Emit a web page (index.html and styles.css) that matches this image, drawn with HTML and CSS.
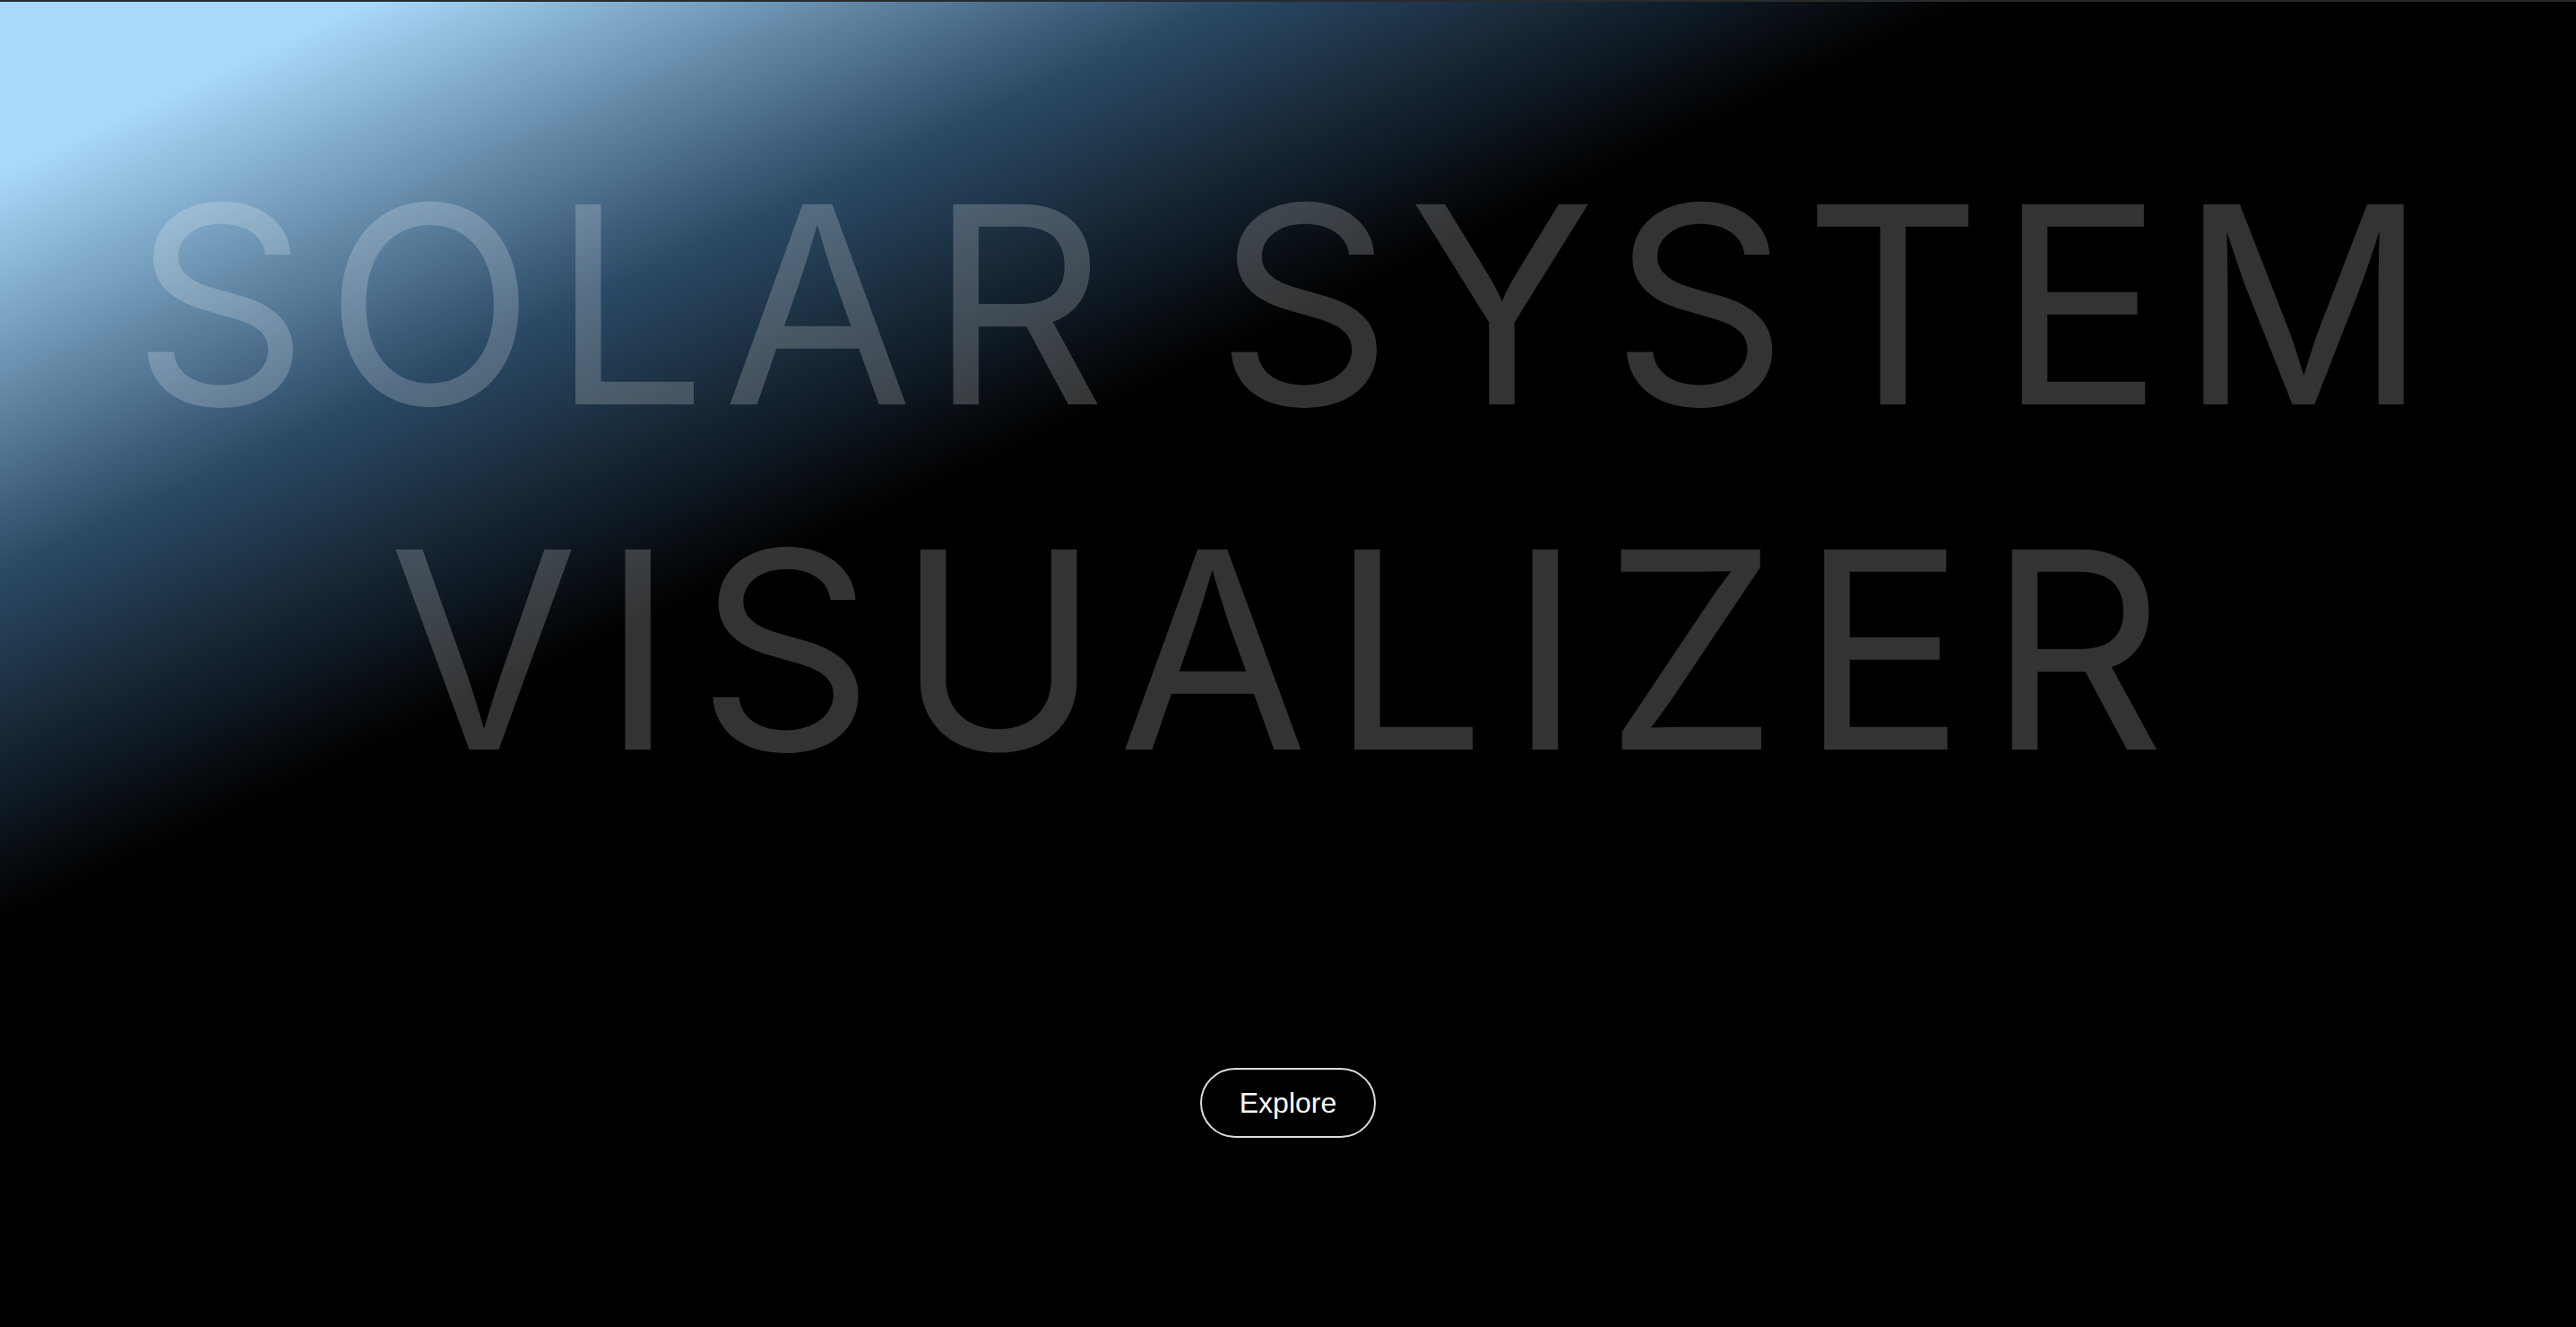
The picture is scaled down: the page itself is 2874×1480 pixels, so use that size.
FILE: index.html
```html
<!DOCTYPE html>
<html lang="en">
<head>
<meta charset="utf-8">
<title>Solar System Visualizer</title>
<link rel="stylesheet" href="styles.css">
</head>
<body>
<main class="hero">
  <h1 class="title">
    <span class="title-line title-line--top">Solar System</span>
    <span class="title-line title-line--bottom">Visualizer</span>
  </h1>
  <button class="explore-btn" type="button">Explore</button>
</main>
</body>
</html>
```

FILE: styles.css
```css
html, body {
  margin: 0;
  padding: 0;
  background: #000;
}

.hero {
  box-sizing: border-box;
  min-height: 100vh;
  display: flex;
  flex-direction: column;
  align-items: center;
  padding-top: 145px;
  border-top: 2px solid #2a2a2a;
  background: linear-gradient(155deg, #aad8f9 0%, #aad8f9 6.8%, #2b4a66 22.5%, #000 36.5%, #000 100%);
}

.title {
  margin: 0;
  font-family: "Inter", "Liberation Sans", sans-serif;
  font-weight: 400;
  font-size: 307px;
  line-height: 385px;
  text-transform: uppercase;
  text-align: center;
  color: rgba(255, 255, 255, 0.2);
}

.title-line {
  display: block;
  white-space: nowrap;
}

.title-line--top {
  letter-spacing: 18px;
}

.title-line--bottom {
  letter-spacing: 25px;
}

.explore-btn {
  margin-top: 274px;
  box-sizing: border-box;
  height: 78px;
  padding: 0 42px;
  border: 2px solid #dcdcdc;
  border-radius: 39px;
  background: transparent;
  color: #fff;
  font-family: "Liberation Sans", Arial, sans-serif;
  font-size: 32px;
  line-height: 1;
  cursor: pointer;
}
```
